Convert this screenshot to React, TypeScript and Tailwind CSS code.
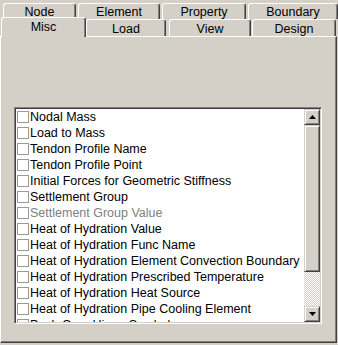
const ROW1 = [
  { label: "Node", w: "w-[73px]" },
  { label: "Element", w: "w-[82px]" },
  { label: "Property", w: "w-[84px]" },
  { label: "Boundary", w: "w-[90px]" },
];

const ITEMS: { label: string; disabled?: boolean }[] = [
  { label: "Nodal Mass" },
  { label: "Load to Mass" },
  { label: "Tendon Profile Name" },
  { label: "Tendon Profile Point" },
  { label: "Initial Forces for Geometric Stiffness" },
  { label: "Settlement Group" },
  { label: "Settlement Group Value", disabled: true },
  { label: "Heat of Hydration Value" },
  { label: "Heat of Hydration Func Name" },
  { label: "Heat of Hydration Element Convection Boundary" },
  { label: "Heat of Hydration Prescribed Temperature" },
  { label: "Heat of Hydration Heat Source" },
  { label: "Heat of Hydration Pipe Cooling Element" },
  { label: "Push Over Hinge Symbol" },
];

function Tab({ label, className }: { label: string; className: string }) {
  return (
    <div
      className={`flex items-start justify-center rounded-t-[3px] border-t border-l border-r border-t-white border-l-white border-r-[#404040] shadow-[inset_-1px_0_#808080] leading-[14px] ${className}`}
    >
      {label}
    </div>
  );
}

function ScrollButton({ up }: { up?: boolean }) {
  return (
    <div className="flex h-[16px] w-[16px] items-center justify-center border border-t-[#d4d0c8] border-l-[#d4d0c8] border-r-[#404040] border-b-[#404040] bg-[#d4d0c8] shadow-[inset_1px_1px_#fff,inset_-1px_-1px_#808080]">
      <svg width="7" height="4" viewBox="0 0 7 4">
        {up ? (
          <path d="M3.5 0 L7 4 L0 4 Z" fill="#000" />
        ) : (
          <path d="M0 0 L7 0 L3.5 4 Z" fill="#000" />
        )}
      </svg>
    </div>
  );
}

export default function App() {
  return (
    <div className="h-[345px] w-[338px] overflow-hidden bg-[#d4d0c8] font-['Liberation_Sans',Arial,sans-serif] text-[12.5px] text-black">
      {/* tab rows */}
      <div className="mt-[3px] flex h-[16px] gap-[2px] pl-[3px]">
        {ROW1.map((t) => (
          <Tab key={t.label} label={t.label} className={`${t.w} h-[16px] pt-[1px]`} />
        ))}
      </div>
      <div className="flex h-[17px] items-end pl-[1px]">
        <Tab
          label="Misc"
          className="relative z-10 -mb-[1px] h-[20px] w-[85px] bg-[#d4d0c8] pt-[2px]"
        />
        <Tab label="Load" className="h-[17px] w-[80px] pt-[2px]" />
        <Tab label="View" className="ml-[3px] h-[17px] w-[82px] pt-[2px]" />
        <Tab label="Design" className="ml-[1px] h-[17px] w-[84px] pt-[2px]" />
      </div>

      {/* panel */}
      <div className="h-[307px] w-[337px] border border-t-white border-l-white border-r-[#404040] border-b-[#404040] shadow-[inset_-1px_-1px_#808080]">
        <div className="ml-[13px] mt-[70px] h-[217px] w-[308px] border border-t-[#808080] border-l-[#808080] border-r-white border-b-white bg-white shadow-[inset_1px_1px_#404040,inset_-1px_-1px_#d4d0c8] p-[1px]">
          <div className="flex h-[213px]">
            <div className="flex-1 overflow-hidden">
              {ITEMS.map((it) => (
                <div
                  key={it.label}
                  className={`flex h-[16px] items-center whitespace-nowrap pl-[1px] ${it.disabled ? "text-[#808080]" : ""}`}
                >
                  <span className="mr-[1px] h-[12px] w-[12px] shrink-0 border border-[#9a9a9a] bg-white" />
                  <span className="leading-[16px]">{it.label}</span>
                </div>
              ))}
            </div>
            <div className="flex w-[16px] flex-col">
              <ScrollButton up />
              <div className="h-[147px] border border-t-[#d4d0c8] border-l-[#d4d0c8] border-r-[#404040] border-b-[#404040] bg-[#d4d0c8] shadow-[inset_1px_1px_#fff,inset_-1px_-1px_#808080]" />
              <div className="h-[34px] bg-[repeating-conic-gradient(#d4d0c8_0%_25%,#ffffff_0%_50%)] bg-[length:2px_2px]" />
              <ScrollButton />
            </div>
          </div>
        </div>
      </div>
    </div>
  );
}
